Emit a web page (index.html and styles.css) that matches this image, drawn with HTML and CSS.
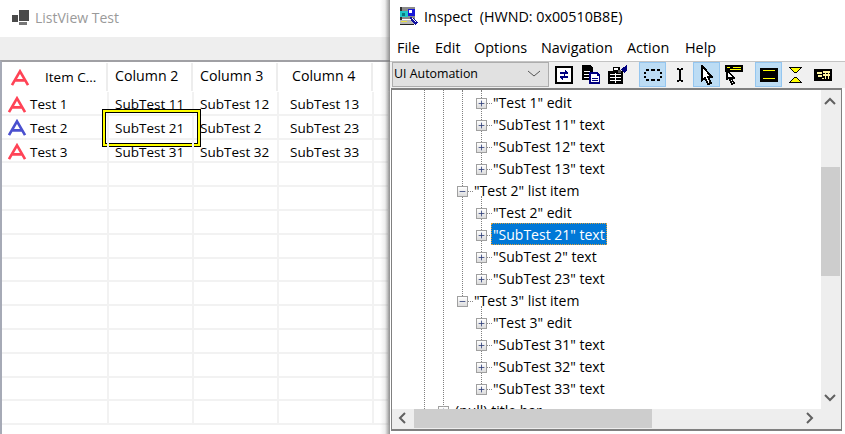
FILE: index.html
```html
<!DOCTYPE html>
<html lang="en">
<head>
<meta charset="utf-8">
<title>ListView Test and Inspect</title>
<link rel="stylesheet" href="styles.css">
</head>
<body>
<svg class="defs" width="0" height="0" aria-hidden="true">
  <defs>
    <symbol id="letter" viewBox="0 0 20 18"><path d="M1.5 17 10 2.5 18.5 17M5 12h10" fill="none" stroke="currentColor" stroke-width="2.8"/></symbol>
    <symbol id="plus" viewBox="0 0 11 11"><path d="M2 5.5h7M5.5 2v7" stroke="#2f3f78" fill="none"/></symbol>
    <symbol id="minus" viewBox="0 0 11 11"><path d="M2 5.5h7" stroke="#2f3f78" fill="none"/></symbol>
  </defs>
</svg>
<main class="desktop">
  <section class="listapp">
    <header class="apptitle">
      <svg class="appicon" width="17" height="16" viewBox="0 0 17 16" shape-rendering="crispEdges"><path d="M7 0h10v11H7z" fill="#4a4a4a"/><path d="M0 5h6v7H0z" fill="#4a4a4a"/><path d="M7 12h8v3H7z" fill="#777"/></svg>
      <span>ListView Test</span>
    </header>
    <div class="appband"></div>
    <div class="list">
      <div class="listrow head">
        <div class="cell first"><svg class="a a-head"><use href="#letter"/></svg><span class="headname">Item C...</span></div>
        <div class="cell h2">Column 2</div>
        <div class="cell h3">Column 3</div>
        <div class="cell h4">Column 4</div>
        <div class="cell"></div>
      </div>
      <div class="listrow"><div class="cell first"><svg class="a"><use href="#letter"/></svg>Test 1</div><div class="cell sub2">SubTest 11</div><div class="cell sub3">SubTest 12</div><div class="cell sub4">SubTest 13</div><div class="cell"></div></div>
      <div class="listrow"><div class="cell first"><svg class="a blue"><use href="#letter"/></svg>Test 2</div><div class="cell sub2 picked">SubTest 21</div><div class="cell sub3">SubTest 2</div><div class="cell sub4">SubTest 23</div><div class="cell"></div></div>
      <div class="listrow"><div class="cell first"><svg class="a"><use href="#letter"/></svg>Test 3</div><div class="cell sub2">SubTest 31</div><div class="cell sub3">SubTest 32</div><div class="cell sub4">SubTest 33</div><div class="cell"></div></div>
      <div class="listrow"><div class="cell"></div><div class="cell"></div><div class="cell"></div><div class="cell"></div><div class="cell"></div></div>
      <div class="listrow"><div class="cell"></div><div class="cell"></div><div class="cell"></div><div class="cell"></div><div class="cell"></div></div>
      <div class="listrow"><div class="cell"></div><div class="cell"></div><div class="cell"></div><div class="cell"></div><div class="cell"></div></div>
      <div class="listrow"><div class="cell"></div><div class="cell"></div><div class="cell"></div><div class="cell"></div><div class="cell"></div></div>
      <div class="listrow"><div class="cell"></div><div class="cell"></div><div class="cell"></div><div class="cell"></div><div class="cell"></div></div>
      <div class="listrow"><div class="cell"></div><div class="cell"></div><div class="cell"></div><div class="cell"></div><div class="cell"></div></div>
      <div class="listrow"><div class="cell"></div><div class="cell"></div><div class="cell"></div><div class="cell"></div><div class="cell"></div></div>
      <div class="listrow"><div class="cell"></div><div class="cell"></div><div class="cell"></div><div class="cell"></div><div class="cell"></div></div>
      <div class="listrow"><div class="cell"></div><div class="cell"></div><div class="cell"></div><div class="cell"></div><div class="cell"></div></div>
      <div class="listrow"><div class="cell"></div><div class="cell"></div><div class="cell"></div><div class="cell"></div><div class="cell"></div></div>
      <div class="listrow"><div class="cell"></div><div class="cell"></div><div class="cell"></div><div class="cell"></div><div class="cell"></div></div>
    </div>
  </section>

  <section class="inspect">
    <header class="insptitle">
      <svg class="inspicon" width="20" height="20" viewBox="0 0 21 21" shape-rendering="crispEdges">
        <path d="M3 1h14v13H3z" fill="#8a8a8a"/><path d="M1 1h2v14H1z" fill="#333"/><path d="M9 3h8v8H9z" fill="#1818d8"/><path d="M11 4h3v3h-3z" fill="#fff"/>
        <path d="M1 5h8v7H1z" fill="#20c8c8"/><path d="M3 7h3v3H3z" fill="#0a7a80"/><path d="M1 15h15v4H1z" fill="#b8b8b8"/><path d="M2 16h6v1H2z" fill="#e8e040"/><path d="M1 19h15v1H1z" fill="#222"/>
        <path d="M11 12l3 0 6 5-2 3-5-4z" fill="#1010a0"/><path d="M13 13l2 0 3 3-1 1z" fill="#fff"/>
      </svg>
      <span>Inspect&nbsp; (HWND: 0x00510B8E)</span>
    </header>
    <nav class="menubar">
      <span class="menuitem m-file">File</span>
      <span class="menuitem m-edit">Edit</span>
      <span class="menuitem m-options">Options</span>
      <span class="menuitem m-nav">Navigation</span>
      <span class="menuitem m-action">Action</span>
      <span class="menuitem">Help</span>
    </nav>
    <div class="toolbar">
      <div class="combo"><span>UI Automation</span>
        <svg width="14" height="8" viewBox="0 0 14 8"><path d="M1 1l6 5 6-5" fill="none" stroke="#555"/></svg>
      </div>
      <div class="tools">
        <div class="tool"><svg width="18" height="18" viewBox="0 0 18 18" shape-rendering="crispEdges"><path d="M1 1h16v16H1z" fill="#fff" stroke="#000" stroke-width="2"/><path d="M5 6h5V4h1v1h1v1h1v2H5zM13 12H8v2H7v-1H6v-1H5v-2h8z" fill="#000080"/><path d="M9 8h1v2H9z" fill="#000080"/></svg></div>
        <div class="tool"><svg width="20" height="19" viewBox="0 0 20 19" shape-rendering="crispEdges"><path d="M1 0h8l3 3v12H1z" fill="#000"/><path d="M3 6h6M3 9h6M3 12h6" stroke="#fff"/><path d="M8 7h8l3 3v9H8z" fill="#000080"/><path d="M10 9h6v2h2v6h-8z" fill="#fff"/><path d="M11 13h6M11 15h6" stroke="#000080"/></svg></div>
        <div class="tool"><svg width="21" height="20" viewBox="0 0 21 20" shape-rendering="crispEdges"><path d="M1 6h15v13H1z" fill="#000"/><path d="M3 9h11M3 12h11M3 15h11M8 8v10" stroke="#fff"/><path d="M6 2h7v4H6z" fill="#000"/><path d="M7 3h4v2H7z" fill="#fff"/><path d="M14 4l6-4v6l-3 2z" fill="#000080"/><path d="M11 5h3v3h-3z" fill="#555"/></svg></div>
      </div>
      <div class="tools">
        <div class="tool on"><svg width="18" height="12" viewBox="0 0 18 12" shape-rendering="crispEdges"><path d="M2 1h3M7 1h4M13 1h3M2 11h3M7 11h4M13 11h3M1 3v2M1 7v2M17 3v2M17 7v2" stroke="#000" stroke-width="2" fill="none"/></svg></div>
        <div class="tool"><svg width="8" height="14" viewBox="0 0 8 14" shape-rendering="crispEdges"><path d="M1 0h2v1h2V0h2v2H5v10h2v2H5v-1H3v1H1v-2h2V2H1z" fill="#000"/></svg></div>
        <div class="tool on"><svg width="12" height="20" viewBox="0 0 12 20" shape-rendering="crispEdges"><path d="M1 1v14l3-2 3 6 3-1-3-6h4z" fill="#fff" stroke="#000" stroke-width="2"/></svg></div>
        <div class="tool"><svg width="18" height="20" viewBox="0 0 18 20" shape-rendering="crispEdges"><path d="M0 0h18v7H0z" fill="#000"/><path d="M2 2h3M8 2h8M5 4h11" stroke="#ffff00" stroke-width="1"/><path d="M2 5v9l2-1 3 6 2-1-3-5h3z" fill="#fff" stroke="#000" stroke-width="1.5"/></svg></div>
      </div>
      <div class="tools">
        <div class="tool on"><svg width="18" height="14" viewBox="0 0 18 14" shape-rendering="crispEdges"><path d="M0 0h18v14H0z" fill="#000"/><path d="M3 2h12v1H3zM3 10h12v1H3z" fill="#ffff00"/></svg></div>
        <div class="tool"><svg width="13" height="16" viewBox="0 0 13 16" shape-rendering="crispEdges"><path d="M0 0h13v1h-1v1h-1v1h-1v1H9v1H8v1H5V5H4V4H3V3H2V2H1V1H0zM5 10h3v1h1v1h1v1h1v1h1v1h1v1H0v-1h1v-1h1v-1h1v-1h1v-1h1z" fill="#000"/><path d="M2 1h9L8 5H5zM5 11h3l3 4H2z" fill="#ffff00"/></svg></div>
        <div class="tool"><svg width="18" height="12" viewBox="0 0 18 12" shape-rendering="crispEdges"><path d="M0 0h18v12H0z" fill="#000"/><path d="M3 3h4v1H3zM4 6h3v1H4zM9 2h6v1H9zM9 5h6v1H9zM11 2v8M14 2v8M8 9h2" stroke="#fff8a0" stroke-width="1" fill="none"/></svg></div>
      </div>
    </div>
    <div class="treeframe">
      <div class="treebody">
        <div class="tree">
          <i class="vline v424"></i><i class="vline v443"></i><i class="vline v462"></i>
          <i class="vline w1"></i><i class="vline w2"></i><i class="vline w3"></i>
          <div class="node leaf"><svg class="exp"><use href="#plus"/></svg><span class="label">"Test 1" edit</span></div>
          <div class="node leaf"><svg class="exp"><use href="#plus"/></svg><span class="label">"SubTest 11" text</span></div>
          <div class="node leaf"><svg class="exp"><use href="#plus"/></svg><span class="label">"SubTest 12" text</span></div>
          <div class="node leaf"><svg class="exp"><use href="#plus"/></svg><span class="label">"SubTest 13" text</span></div>
          <div class="node item"><svg class="exp"><use href="#minus"/></svg><span class="label">"Test 2" list item</span></div>
          <div class="node leaf"><svg class="exp"><use href="#plus"/></svg><span class="label">"Test 2" edit</span></div>
          <div class="node leaf"><svg class="exp"><use href="#plus"/></svg><span class="label sel">"SubTest 21" text</span></div>
          <div class="node leaf"><svg class="exp"><use href="#plus"/></svg><span class="label">"SubTest 2" text</span></div>
          <div class="node leaf"><svg class="exp"><use href="#plus"/></svg><span class="label">"SubTest 23" text</span></div>
          <div class="node item"><svg class="exp"><use href="#minus"/></svg><span class="label">"Test 3" list item</span></div>
          <div class="node leaf"><svg class="exp"><use href="#plus"/></svg><span class="label">"Test 3" edit</span></div>
          <div class="node leaf"><svg class="exp"><use href="#plus"/></svg><span class="label">"SubTest 31" text</span></div>
          <div class="node leaf"><svg class="exp"><use href="#plus"/></svg><span class="label">"SubTest 32" text</span></div>
          <div class="node leaf"><svg class="exp"><use href="#plus"/></svg><span class="label">"SubTest 33" text</span></div>
          <div class="node top"><svg class="exp"><use href="#plus"/></svg><span class="label">(null) title bar</span></div>
        </div>
        <div class="vscroll">
          <svg class="chev up" width="14" height="9" viewBox="0 0 14 9"><path d="M2 7l5-5 5 5" fill="none" stroke="#606060" stroke-width="2"/></svg>
          <div class="vthumb"></div>
          <svg class="chev down" width="14" height="9" viewBox="0 0 14 9"><path d="M2 2l5 5 5-5" fill="none" stroke="#606060" stroke-width="2"/></svg>
        </div>
      </div>
      <div class="hscroll">
        <svg class="chev left" width="9" height="14" viewBox="0 0 9 14"><path d="M7 2L2 7l5 5" fill="none" stroke="#606060" stroke-width="2"/></svg>
        <div class="hthumb"></div>
        <svg class="chev right" width="9" height="14" viewBox="0 0 9 14"><path d="M2 2l5 5-5 5" fill="none" stroke="#606060" stroke-width="2"/></svg>
      </div>
    </div>
  </section>
</main>
</body>
</html>
```

FILE: styles.css
```css
* { box-sizing: border-box; }
html, body { margin: 0; padding: 0; background: #fff; }
body { width: 845px; height: 434px; overflow: hidden; font-family: "Open Sans", "Noto Sans", sans-serif; color: #000; }
.defs { position: absolute; }
.desktop { display: flex; width: 845px; height: 434px; }

/* ListView window */
.listapp { position: relative; width: 390px; height: 434px; overflow: hidden; display: flex; flex-direction: column; }
.listapp::after { content: ""; position: absolute; top: 0; right: 0; bottom: 0; width: 10px; background: linear-gradient(to right, rgba(120,120,120,0), rgba(120,120,120,.12) 50%, rgba(110,110,110,.75)); }
.apptitle { height: 37px; flex: none; display: flex; align-items: center; gap: 6px; padding: 0 0 2px 12px; font-size: 14px; color: #9a9a9a; }
.appicon { flex: none; }
.appband { height: 23px; flex: none; background: #eeeeee; }
.list { flex: 1; border-top: 2px solid #a0a0a4; border-left: 2px solid #a6aab6; overflow: hidden; }
.listrow { display: grid; grid-template-columns: 107px 85px 85px 95px 1fr; height: 23.8px; font-size: 13.5px; line-height: 24px; border-bottom: 2px solid #f2f2f2; }
.listrow.head { grid-template-columns: 106px 85px 85px 95px 1fr; height: 30px; line-height: 26px; border-bottom: 0; font-size: 14.2px; }
.cell { position: relative; border-right: 2px solid #f2f2f2; white-space: nowrap; display: flex; min-width: 0; }
.head .cell { margin-top: 1px; height: 28px; border-right-color: #ededed; }
.h2, .h3 { padding-left: 7px; }
.h4 { padding-left: 14px; }
.first { padding-left: 5px; align-items: center; gap: 3px; }
.sub2 { padding-left: 6px; }
.sub3 { padding-left: 6px; }
.sub4 { padding-left: 11px; }
.a { width: 20px; height: 17px; color: #ff4356; flex: none; filter: blur(.3px); }
.a.blue { color: #4a50cf; }
.a-head { margin-left: 3px; }
.headname { margin-left: 12px; font-size: 13.5px; }
.picked::after { content: ""; position: absolute; left: -7px; top: -7px; width: 97px; height: 36px; border: 1px solid #000; box-shadow: inset 0 0 0 2px #ffff00, inset 0 0 0 3px #000; pointer-events: none; }

/* Inspect window */
.inspect { width: 455px; height: 434px; display: flex; flex-direction: column; background: #fff; }
.insptitle { height: 35px; flex: none; display: flex; align-items: center; gap: 5px; padding: 0 0 3px 9px; font-size: 14.3px; }
.inspicon { flex: none; }
.menubar { height: 26px; flex: none; display: flex; align-items: center; padding: 0 0 1px 7px; font-size: 14.4px; }
.m-file { width: 38px; }
.m-edit { width: 39px; }
.m-options { width: 67px; }
.m-nav { width: 86px; }
.m-action { width: 58px; }
.toolbar { height: 27px; flex: none; background: #f0f0f0; border-top: 1px solid #c4c4c4; padding: 0 0 0 2px; display: flex; align-items: flex-start; }
.combo { width: 157px; height: 25px; flex: none; background: #e1e1e1; border: 1px solid #adadad; display: flex; align-items: center; justify-content: space-between; padding: 0 7px 2px 1px; font-size: 12.4px; }
.tools { display: flex; margin-left: 8px; }
.combo + .tools { margin-left: 1px; }
.tool { width: 27px; height: 25px; display: flex; align-items: center; justify-content: center; border: 1px solid transparent; }
.tool.on { background: #bcdcf4; border-color: #94c6f0; }
.treeframe { flex: none; height: 343px; margin-right: 3px; margin-left: 1px; border: 1px solid #808080; border-width: 2px 1px 2px 1px; display: flex; flex-direction: column; overflow: hidden; background: #fff; }
.treebody { flex: none; height: 319px; display: flex; }
.tree { position: relative; flex: 1; overflow: hidden; padding-top: 2px; font-size: 14px; }
.vscroll { width: 20px; flex: none; background: #eeeeee; display: flex; flex-direction: column; align-items: flex-start; }
.vthumb { width: 19px; height: 109px; background: #cdcdcd; margin-top: 61px; margin-bottom: auto; }
.chev { flex: none; }
.chev.up { margin: 7px 0 0 2px; }
.chev.down { margin: 0 0 7px 2px; }
.hscroll { flex: none; height: 20px; background: #eeeeee; display: flex; align-items: flex-start; }
.chev.left { margin: 2px 7px 0 6px; }
.chev.right { margin: 2px 27px 0 0; }
.hthumb { width: 238px; height: 19px; background: #cdcdcd; margin-right: auto; }
.node { position: relative; height: 22px; display: flex; align-items: center; white-space: nowrap; }
.exp { flex: none; width: 11px; height: 11px; background: linear-gradient(#fff, #dcdcdc); border: 1px solid #a0a0a0; position: relative; }
.node.leaf { padding-left: 84px; }
.node.item { padding-left: 65px; }
.node.top { padding-left: 46px; }
.node .label { margin-left: 5px; padding: 0 1px; line-height: 22px; height: 22px; }
.node::before { content: ""; position: absolute; top: 11px; width: 5px; border-top: 1px dotted #888; }
.node.leaf::before { left: 95px; }
.node.item::before { left: 76px; }
.node.top::before { left: 57px; }
.node .label.sel { background: #0078d7; color: #fff; outline: 1px dotted #d8a040; outline-offset: -1px; margin-left: 4px; padding: 0 2px; align-self: flex-start; margin-top: -1px; line-height: 24px; }
.vline { position: absolute; top: 0; border-left: 1px dotted #808080; }
.v424 { left: 32px; height: 100%; }
.v443 { left: 51px; height: 100%; }
.v462 { left: 70px; height: 206px; }
.w1 { left: 89px; top: 0; height: 82px; }
.w2 { left: 89px; top: 106px; height: 88px; }
.w3 { left: 89px; top: 216px; height: 88px; }
```
